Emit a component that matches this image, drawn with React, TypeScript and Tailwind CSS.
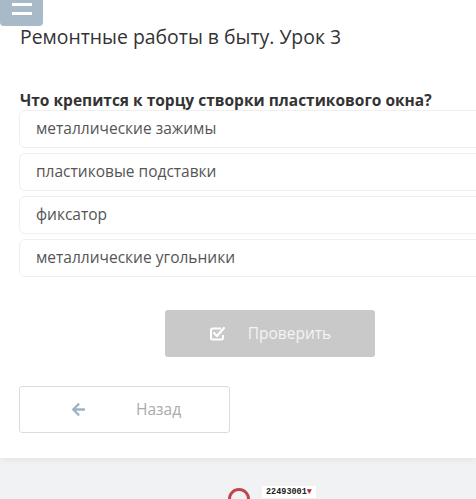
import { FaArrowLeft } from 'react-icons/fa';

const options = [
  'металлические зажимы',
  'пластиковые подставки',
  'фиксатор',
  'металлические угольники',
];

function CheckSquare() {
  return (
    <svg width="17" height="15" viewBox="0 0 17 15" fill="none">
      <path d="M12 2.5H3.5a1.5 1.5 0 0 0-1.5 1.5v8a1.5 1.5 0 0 0 1.5 1.5h9a1.5 1.5 0 0 0 1.5-1.5V9" stroke="white" strokeWidth="2" />
      <path d="M5 7l3 3 7-8" stroke="white" strokeWidth="2.2" strokeLinecap="round" strokeLinejoin="round" />
    </svg>
  );
}

export default function App() {
  return (
    <div className="relative h-[499px] w-[476px] overflow-hidden bg-[#f1f2f4] font-['Open_Sans',sans-serif]">
      <div className="h-[458px] bg-white shadow-[0_2px_6px_rgba(0,0,0,0.06)]">
        <div className="flex h-[26px] w-[43px] flex-col items-center gap-[6px] rounded-b-[4px] bg-[#a8bac7] pt-[3px]">
          <span className="h-[3px] w-[20px] bg-white" />
          <span className="h-[3px] w-[20px] bg-white" />
        </div>

        <h1 className="ml-[20px] mt-[-2px] text-[19.4px] leading-[26px] text-[#333]">
          Ремонтные работы в быту. Урок 3
        </h1>

        <p className="ml-[20px] mt-[40px] text-[15.5px] font-bold leading-[20px] text-[#333]">
          Что крепится к торцу створки пластикового окна?
        </p>

        <div className="ml-[19px] mt-0 flex w-[480px] flex-col gap-[5px]">
          {options.map((o) => (
            <div
              key={o}
              className="flex h-[38px] items-center rounded-[6px] border border-[#efefef] pl-[16px] text-[15.5px] text-[#555]"
            >
              {o}
            </div>
          ))}
        </div>

        <div className="mt-[33px] flex justify-center pl-[64px]">
          <button
            type="button"
            className="flex h-[47px] w-[210px] items-center justify-center gap-[22px] rounded-[3px] bg-[#c9c9c9] text-[15.5px] text-[#f4f4f4]"
          >
            <CheckSquare />
            Проверить
          </button>
        </div>

        <button
          type="button"
          className="ml-[19px] mt-[29px] flex h-[47px] w-[211px] items-center rounded-[3px] border border-[#dcdcdc] pl-[51px] text-[15.5px] text-[#aaa]"
        >
          <FaArrowLeft size={15} className="text-[#9db3c3]" />
          <span className="ml-[50px]">Назад</span>
        </button>
      </div>

      <div className="absolute left-[228px] top-[488px] h-[22px] w-[22px] rounded-full border-[3px] border-[#c0454c]" />
      <div className="absolute left-[262px] top-[486px] bg-white px-[4px] font-['Liberation_Mono',monospace] text-[8.5px] font-bold leading-[12px] text-[#222]">
        22493001<span className="text-[#c0262f]">▼</span>
      </div>
    </div>
  );
}
